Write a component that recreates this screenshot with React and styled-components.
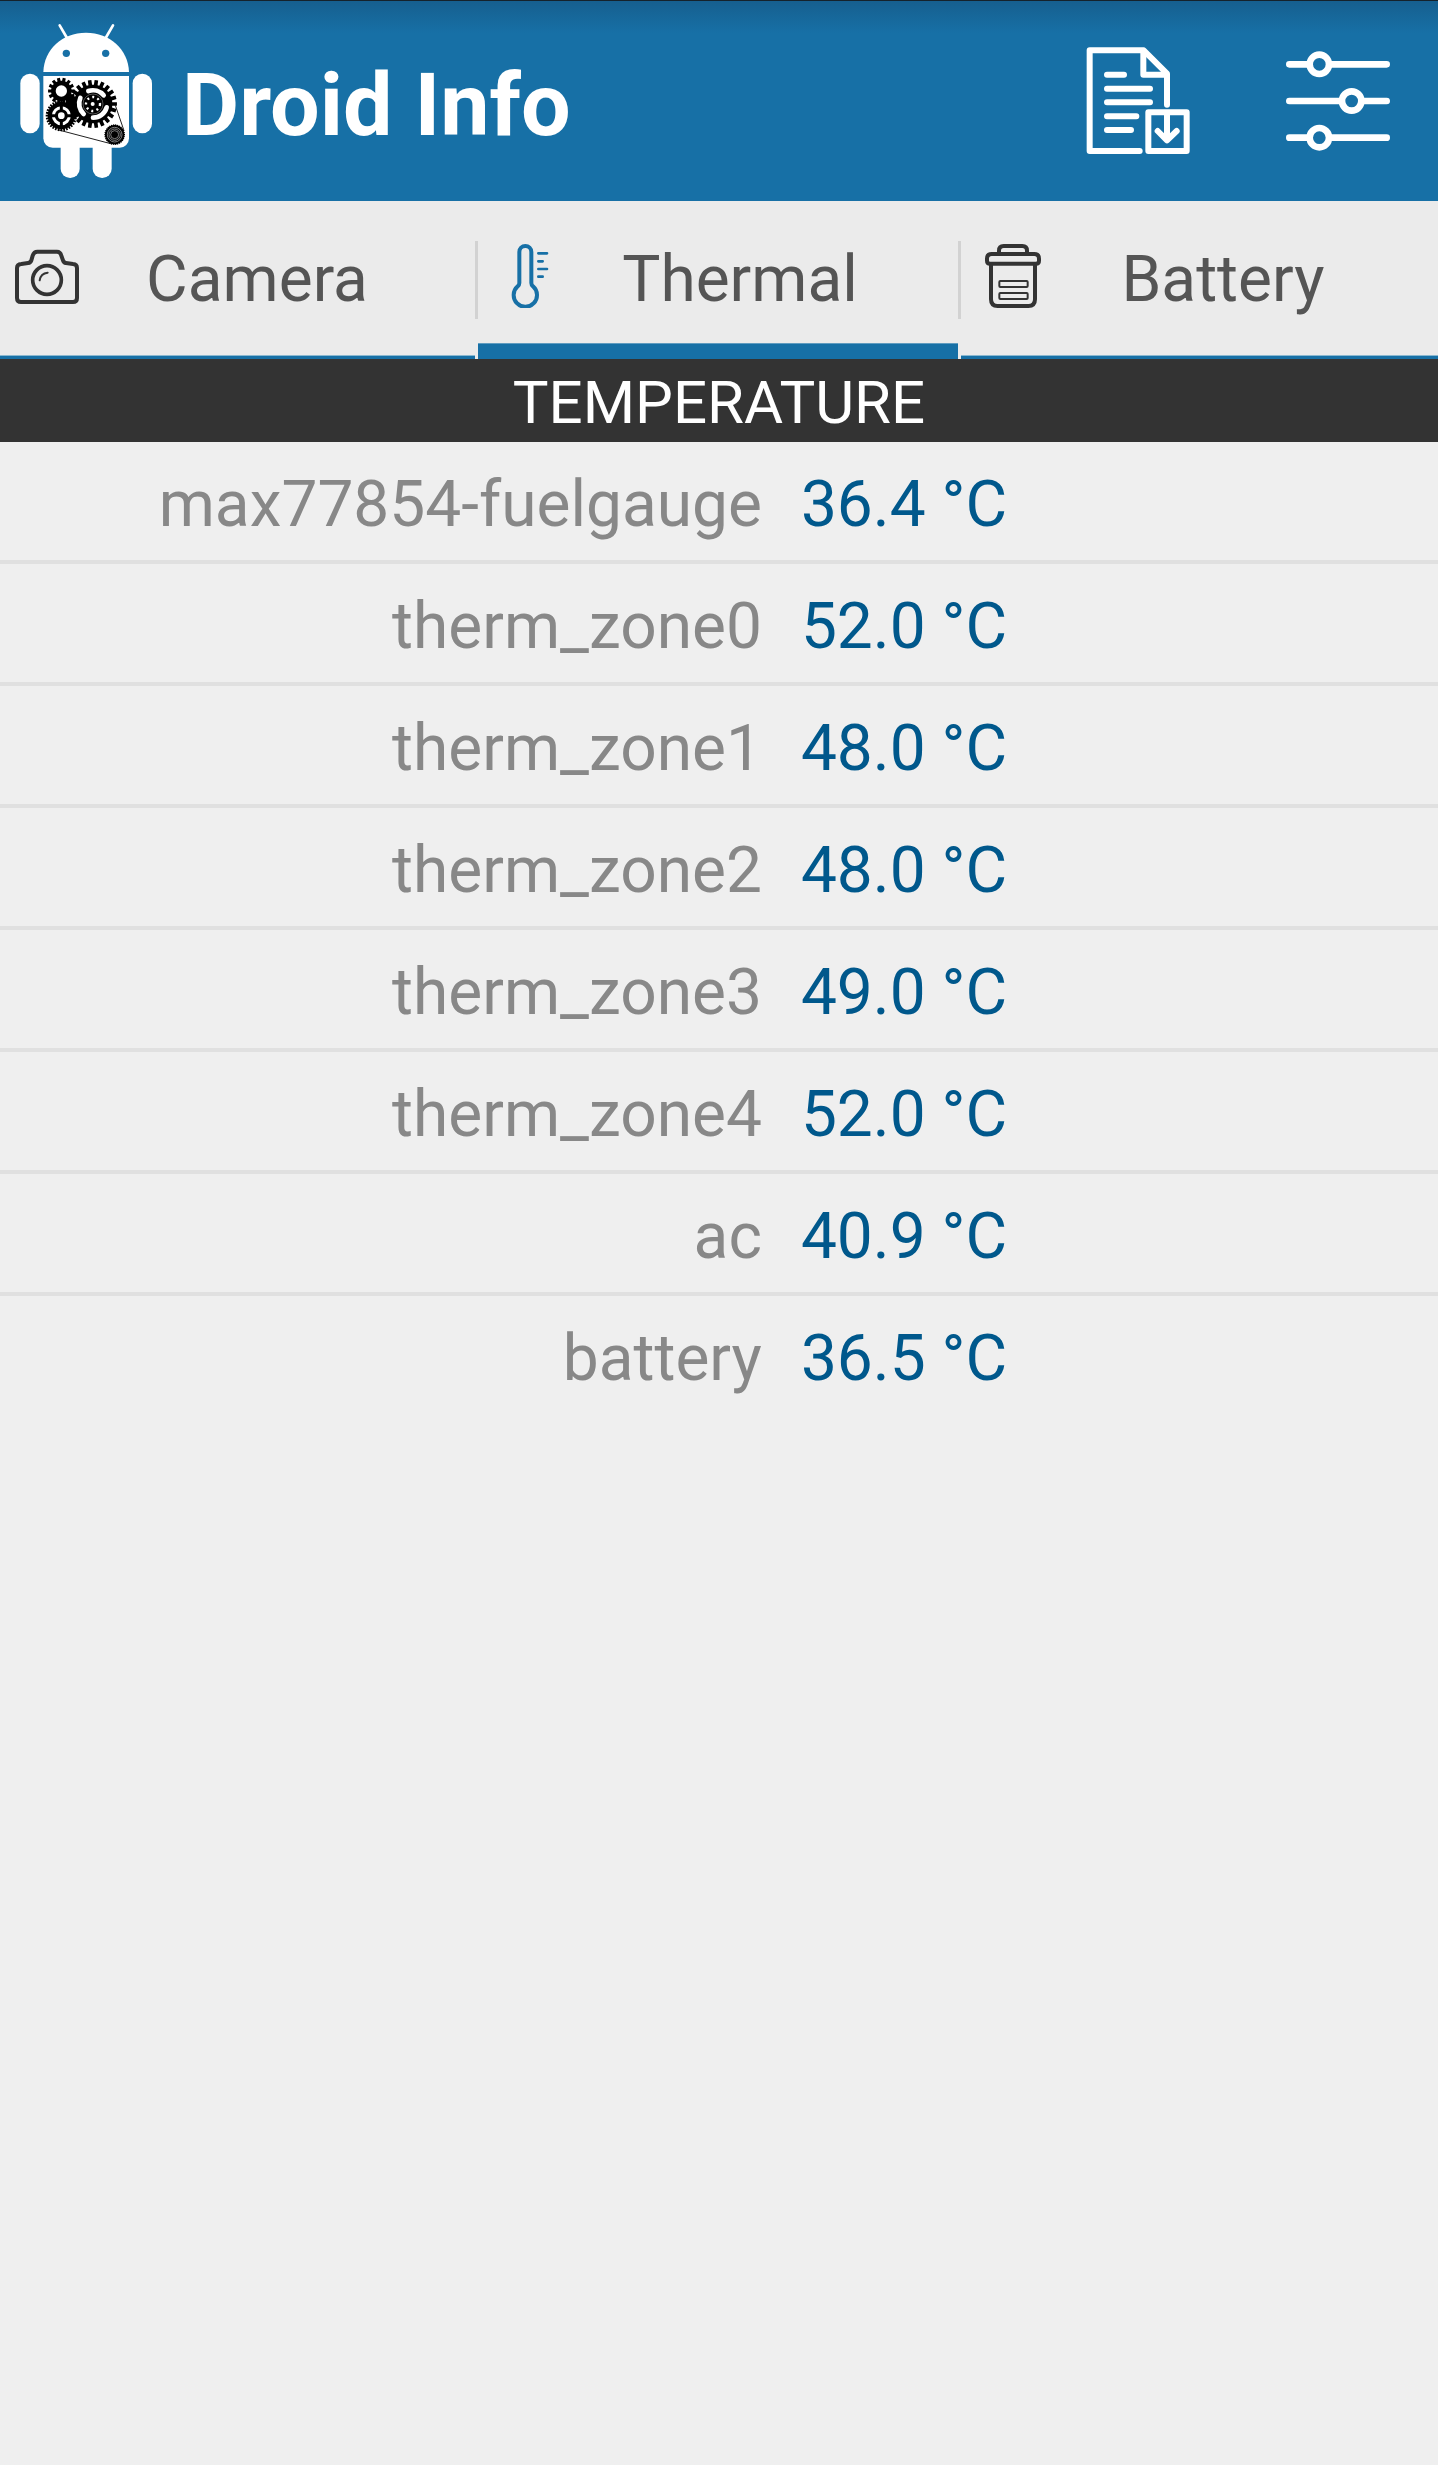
import { useState } from "react";
import styled, { createGlobalStyle } from "styled-components";

const GlobalStyle = createGlobalStyle`
  * {
    box-sizing: border-box;
  }

  body {
    margin: 0;
    background-color: #efefef;
    font-family: Roboto, "Liberation Sans", sans-serif;
  }
`;

const Header = styled.header`
  display: flex;
  align-items: center;
  justify-content: space-between;
  padding: 22px 48px 22px 20px;
  border-top: 1px solid #15222c;
  background: #1770a6 linear-gradient(#165f8f, #1770a6) no-repeat top / 100% 32px;
  color: #ffffff;
`;

const Brand = styled.div`
  display: flex;
  align-items: center;
  gap: 30px;
`;

const Logo = styled.svg`
  display: block;
  width: 132px;
  height: 156px;
`;

const Title = styled.h1`
  margin: 0;
  padding-top: 8px;
  font-size: 88px;
  line-height: 104px;
  font-weight: 700;
`;

const Actions = styled.div`
  display: flex;
  gap: 96px;
`;

const ActionButton = styled.button`
  padding: 0;
  border: none;
  background: none;
  color: inherit;
  cursor: pointer;

  svg {
    display: block;
    width: 104px;
    height: 108px;
  }
`;

const TabStrip = styled.nav`
  overflow: hidden;
  background-color: #ebebeb;
`;

/* the strip is slightly wider than the screen, so the outer tabs run off it */
const TabRow = styled.div`
  display: flex;
  align-items: center;
  margin: 0 -3px 0 -5px;
`;

const Divider = styled.span`
  width: 3px;
  height: 78px;
  background-color: #d2d2d2;
`;

const Tab = styled.button`
  flex: 1 1 0;
  display: flex;
  align-items: center;
  height: 158px;
  padding: 0 40px 0 20px;
  border: none;
  background: none;
  box-shadow: ${(props) =>
    props.$active
      ? "inset 0 -15px #1770a6, inset 0 -16px #5f9cc0"
      : "inset 0 -3px #1770a6, inset 0 -4px #8ab8d0"};
  color: #555555;
  font-family: inherit;
  font-size: 64px;
  line-height: 80px;
  cursor: pointer;

  span {
    flex: 1;
    text-align: center;
  }
`;

const TabIcon = styled.svg`
  width: 64px;
  height: 64px;
  margin-bottom: 8px;
  color: ${(props) => (props.$active ? "#1770a6" : "#333333")};
`;

const SectionTitle = styled.h2`
  margin: 0;
  padding-top: 4px;
  background-color: #333333;
  color: #ffffff;
  font-size: 60px;
  line-height: 79px;
  font-weight: 400;
  text-align: center;
`;

const ReadingTable = styled.table`
  width: 100%;
  border-collapse: collapse;
  table-layout: fixed;
  font-size: 64px;
  line-height: 112px;
`;

const ReadingRow = styled.tr`
  &:not(:last-child) {
    box-shadow: inset 0 -4px #e0e0e0;
  }
`;

const ReadingName = styled.th`
  width: 55%;
  padding: 7px 29px 3px 0;
  color: #888888;
  font-weight: 400;
  text-align: right;
`;

const ReadingValue = styled.td`
  padding: 7px 0 3px 10px;
  color: #00588c;
`;

const gearPath = (cx, cy, outer, inner, teeth) => {
  const step = (Math.PI * 2) / teeth;
  const points = [];
  for (let i = 0; i < teeth; i++) {
    [
      [inner, -0.34],
      [outer, -0.26],
      [outer, 0.26],
      [inner, 0.34],
    ].forEach(([r, shift]) => {
      const a = (i + shift) * step;
      points.push(`${cx + r * Math.cos(a)} ${cy + r * Math.sin(a)}`);
    });
  }
  return `M${points.join("L")}Z`;
};

const DroidLogo = () => (
  <Logo viewBox="60 69 396 468" aria-hidden="true">
    <g fill="#ffffff">
      <path d="M179 76l22 38M339 76l-22 38" stroke="#ffffff" strokeWidth="8" strokeLinecap="round" />
      <path d="M130 216C132 148 186 98 258 98S385 148 387 216Z" />
      <path d="M130 228H387V415A28 28 0 0 1 359 443H158A28 28 0 0 1 130 415Z" />
      <rect x="61" y="221" width="58" height="179" rx="29" />
      <rect x="398" y="221" width="58" height="179" rx="29" />
      <path d="M182 440H239V506A28 28 0 0 1 211 534H210A28 28 0 0 1 182 506Z" />
      <path d="M278 440H335V506A28 28 0 0 1 307 534H306A28 28 0 0 1 278 506Z" />
    </g>
    <circle cx="199" cy="160" r="11" fill="#1770a6" />
    <circle cx="317" cy="160" r="11" fill="#1770a6" />
    <path d="M176 390L336 432M346 316L372 392" stroke="#222222" strokeWidth="3" />
    <path d="M196 296L222 280L234 350L214 362Z" />
    <path d={gearPath(184, 273, 40, 31, 14)} />
    <circle cx="184" cy="273" r="17" fill="#ffffff" />
    <path d={gearPath(184, 347, 47, 41, 32)} />
    <circle cx="184" cy="347" r="24" fill="none" stroke="#ffffff" strokeWidth="9" />
    <path d="M184 316V378M153 347H215" stroke="#000000" strokeWidth="9" />
    <circle cx="184" cy="347" r="10" fill="#ffffff" />
    <path d={gearPath(279, 312, 72, 58, 22)} />
    <g fill="none" stroke="#ffffff">
      <path d="M265 273A42 42 0 0 1 311 286" strokeWidth="14" strokeLinecap="round" />
      <path d="M241 294A42 42 0 0 0 251 342" strokeWidth="14" strokeLinecap="round" />
      <path d="M320 322A42 42 0 0 1 279 353" strokeWidth="14" strokeLinecap="round" />
      <circle cx="279" cy="312" r="21" strokeWidth="7" strokeDasharray="6 10" />
      <circle cx="279" cy="312" r="30" strokeWidth="1" />
    </g>
    <circle cx="278" cy="312" r="6" fill="#ffffff" />
    <path d={gearPath(344, 404, 31, 29, 30)} />
    <g fill="none" stroke="#bbbbbb" strokeWidth="2">
      <circle cx="344" cy="404" r="22" />
      <circle cx="344" cy="404" r="17" />
      <circle cx="344" cy="404" r="12" />
    </g>
  </Logo>
);

const ReportIcon = () => (
  <svg
    viewBox="78 82 312 324"
    fill="none"
    stroke="currentColor"
    strokeWidth="18"
    strokeLinecap="round"
    strokeLinejoin="round"
    aria-hidden="true"
  >
    <path d="M239 394H89V92H251L321 162V255" />
    <path d="M250 96V165H318" />
    <path d="M141 165H192M141 207H270M141 248H270M141 290H229M141 331H213" />
    <path d="M265 278H380V394H265Z" />
    <path d="M321 282V360M293 334L321 362L350 334" />
  </svg>
);

const SlidersIcon = () => (
  <svg
    viewBox="678 81 312 324"
    fill="none"
    stroke="currentColor"
    strokeWidth="20"
    strokeLinecap="round"
    aria-hidden="true"
  >
    <path d="M688 133H746M810 133H980M688 243H842M908 243H980M688 353H746M810 353H980" />
    <circle cx="778" cy="133" r="29" />
    <circle cx="875" cy="243" r="29" />
    <circle cx="778" cy="353" r="29" />
  </svg>
);

const CameraIcon = ({ active }) => (
  <TabIcon $active={active} viewBox="45 132 192 192" fill="none" stroke="currentColor" aria-hidden="true">
    <path
      d="M64 192L84 189Q92 188 94 181L98 167Q102 155 112 155H171Q181 155 184 167L189 181Q191 188 198 189L219 192Q231 193 231 204V294Q231 306 219 306H63Q51 306 51 294V204Q51 193 64 192Z"
      strokeWidth="12"
    />
    <circle cx="141" cy="240" r="43" strokeWidth="11" />
    <path d="M119 241Q122 220 143 218" strokeWidth="6" strokeLinecap="round" />
  </TabIcon>
);

const ThermometerIcon = ({ active }) => (
  <TabIcon $active={active} viewBox="84 132 192 192" fill="none" stroke="currentColor" aria-hidden="true">
    <path
      d="M148 156A18 18 0 0 1 184 156V249Q184 255 189 259A35 35 0 1 1 143 259Q148 255 148 249Z"
      strokeWidth="12"
    />
    <path d="M205 160H231M205 184H218M205 207H231M205 230H218" strokeWidth="8" strokeLinecap="round" />
  </TabIcon>
);

const BatteryIcon = ({ active }) => (
  <TabIcon $active={active} viewBox="93 132 192 192" fill="none" stroke="currentColor" aria-hidden="true">
    <g strokeWidth="12">
      <path d="M147 162V152Q147 138 161 138H217Q231 138 231 152V162" />
      <path d="M125 162H253Q267 162 267 176V182Q267 191 258 191H120Q111 191 111 182V176Q111 162 125 162Z" />
      <path d="M123 191V298Q123 318 143 318H235Q255 318 255 298V191" />
    </g>
    <g strokeWidth="6">
      <rect x="148" y="243" width="85" height="18" rx="3" />
      <rect x="148" y="279" width="85" height="18" rx="3" />
    </g>
  </TabIcon>
);

const tabs = [
  { name: "Camera", Icon: CameraIcon },
  { name: "Thermal", Icon: ThermometerIcon },
  { name: "Battery", Icon: BatteryIcon },
];

const readings = [
  { name: "max77854-fuelgauge", value: 36.4 },
  { name: "therm_zone0", value: 52 },
  { name: "therm_zone1", value: 48 },
  { name: "therm_zone2", value: 48 },
  { name: "therm_zone3", value: 49 },
  { name: "therm_zone4", value: 52 },
  { name: "ac", value: 40.9 },
  { name: "battery", value: 36.5 },
];

function App() {
  const [activeTab, setActiveTab] = useState("Thermal");

  return (
    <>
      <GlobalStyle />
      <Header>
        <Brand>
          <DroidLogo />
          <Title>Droid Info</Title>
        </Brand>
        <Actions>
          <ActionButton aria-label="Save report">
            <ReportIcon />
          </ActionButton>
          <ActionButton aria-label="Settings">
            <SlidersIcon />
          </ActionButton>
        </Actions>
      </Header>
      <TabStrip>
        <TabRow>
          {tabs.flatMap(({ name, Icon }, i) => [
            i > 0 && <Divider key={`${name}-divider`} />,
            <Tab key={name} $active={name === activeTab} onClick={() => setActiveTab(name)}>
              <Icon active={name === activeTab} />
              <span>{name}</span>
            </Tab>,
          ])}
        </TabRow>
      </TabStrip>
      <main>
        <SectionTitle>TEMPERATURE</SectionTitle>
        <ReadingTable>
          <tbody>
            {readings.map(({ name, value }) => (
              <ReadingRow key={name}>
                <ReadingName scope="row">{name}</ReadingName>
                <ReadingValue>{value.toFixed(1)} °C</ReadingValue>
              </ReadingRow>
            ))}
          </tbody>
        </ReadingTable>
      </main>
    </>
  );
}

export default App;
